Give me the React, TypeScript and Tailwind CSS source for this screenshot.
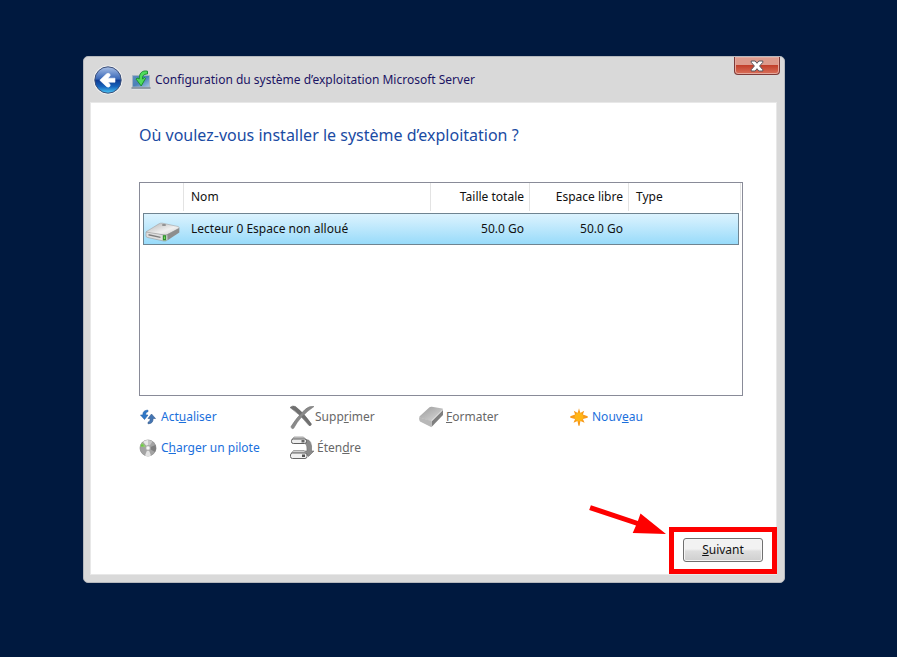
import { useState, type ReactNode } from "react";

type Disk = {
  name: string;
  total: string;
  free: string;
  type: string;
};

const disks: Disk[] = [
  { name: "Lecteur 0 Espace non alloué", total: "50.0 Go", free: "50.0 Go", type: "" },
];

function BackIcon() {
  return (
    <svg viewBox="0 0 30 30" className="size-[30px]" aria-hidden="true">
      <defs>
        <linearGradient id="backFill" x1="0" y1="0" x2="0" y2="1">
          <stop offset="0" stopColor="#a9c0e6" />
          <stop offset="0.45" stopColor="#3a68b8" />
          <stop offset="0.52" stopColor="#0f3c93" />
          <stop offset="0.75" stopColor="#1665bd" />
          <stop offset="1" stopColor="#4cc8f5" />
        </linearGradient>
      </defs>
      <circle cx="15" cy="15" r="14.5" fill="#f2f2f2" />
      <circle cx="15" cy="15" r="13.2" fill="url(#backFill)" stroke="#3c4f78" strokeWidth="1" />
      <path
        d="M6.800 15.200 13.400 9q1.800-1.500 3.400 0 1 1.300-.3 2.600l-1.500 1.600h7v4h-7l1.500 1.600q1.300 1.300.3 2.600-1.600 1.500-3.400 0z"
        fill="#fff"
        stroke="#fff"
        strokeWidth="0.6"
        strokeLinejoin="round"
      />
    </svg>
  );
}

function SetupIcon() {
  return (
    <svg viewBox="0 0 20 20" className="size-5" aria-hidden="true">
      <defs>
        <linearGradient id="setupBox" x1="0" y1="0" x2="1" y2="1">
          <stop offset="0" stopColor="#5c8dbd" />
          <stop offset="0.5" stopColor="#4a80b8" />
          <stop offset="1" stopColor="#a3c8e6" />
        </linearGradient>
      </defs>
      <path d="M1.500 5.500h17V17h-17z" fill="url(#setupBox)" stroke="#a5b3c0" strokeWidth="0.800" />
      <path d="M.5 17h19v2H.5z" fill="#8b98a3" />
      <path d="M1 19.400h18" stroke="#dfe5ea" strokeWidth="0.800" />
      <path
        d="M16.500 1.200C11 0 8 3.500 8.300 9L6 8l-.8 1.200 5 6.800 4.300-7.600-1-.9-2 1.500C11.300 6 12.500 4 16.500 4z"
        fill="#4fdd5c"
        stroke="#1c8f31"
        strokeWidth="1"
        strokeLinejoin="round"
      />
    </svg>
  );
}

function CloseIcon() {
  return (
    <svg viewBox="0 0 14 12" className="h-3 w-[14px]" aria-hidden="true">
      <path
        d="M1.200 1h4L7 3.300 8.800 1h4v1.300L9.600 6l3.200 3.700V11h-4L7 8.700 5.200 11h-4V9.700L4.400 6 1.200 2.300z"
        fill="#fff"
        stroke="#56565f"
        strokeWidth="1"
        strokeLinejoin="round"
      />
    </svg>
  );
}

function DriveIcon() {
  return (
    <svg viewBox="0 0 36 20" className="h-5 w-9" aria-hidden="true">
      <defs>
        <linearGradient id="driveTop" x1="0" y1="0" x2="1" y2="1">
          <stop offset="0" stopColor="#b2b2b2" />
          <stop offset="0.600" stopColor="#f0f0f0" />
          <stop offset="1" stopColor="#c8c8c8" />
        </linearGradient>
      </defs>
      <path d="M1.500 9.500 14 1.800q1.500-.9 3.500-.6L33 4.500q2 .7.800 2L22.500 12.500q-1.500.8-3.500.4L2 11z" fill="url(#driveTop)" stroke="#a2a2a2" strokeWidth="0.600" />
      <path d="M22 12.600 34.300 6v4.500L23 18z" fill="#8d8d8d" />
      <path d="M1 10v4q0 1 1.300 1.400L18.500 19q2.500.4 4-.9v-5.400q-1.500.6-3.500.2z" fill="#dedede" stroke="#8c8c8c" strokeWidth="0.500" />
      <path d="m3.500 12.800 12 2.600" stroke="#7d7d7d" strokeWidth="1.400" />
      <path d="M17.800 13.200h3.400v5.200h-3.400z" fill="#2f8f2b" />
      <path d="M18.900 14.500h1.200V17h-1.200z" fill="#76d763" />
      <ellipse cx="19" cy="3" rx="2.200" ry="0.900" fill="#8f8f8f" />
    </svg>
  );
}

function RefreshIcon() {
  return (
    <svg viewBox="0 0 18 18" className="size-[18px]" aria-hidden="true">
      <path d="M9 2.200C5.300 2.200 3.800 3.800 3.900 7H1.500l4 4.500L9 7H6.700C6.700 5 7.300 4 9 3.700z" fill="#2f78c8" stroke="#2561a6" strokeWidth="0.600" />
      <path d="M9 15.800c3.600 0 5.200-1.800 5.100-5.300h2.400L12.500 6 9 10.500h2.200c0 2-.6 3.300-2.200 3.700z" fill="#4475b3" stroke="#355c8d" strokeWidth="0.600" />
    </svg>
  );
}

function DiscIcon() {
  return (
    <svg viewBox="0 0 18 18" className="size-[18px]" aria-hidden="true">
      <circle cx="9" cy="9" r="8" fill="#a3a3a3" stroke="#8b8b8b" strokeWidth="0.700" />
      <path d="M9 9 4 2.800A8 8 0 0 1 9 1z" fill="#e6e6e6" />
      <path d="M9 9 9 1a8 8 0 0 1 4.500 1.500z" fill="#c6c6c6" />
      <path d="m9 9 7.500-3A8 8 0 0 1 16 13z" fill="#7f7f7f" />
      <path d="m9 9 3 7.400a8 8 0 0 1-6 0z" fill="#e2e2e2" />
      <path d="M9 9 1.200 7.500A8 8 0 0 1 3.200 3.500z" fill="#9bc47f" />
      <path d="M2 5.500h2.500v2H2z" fill="#67cf3f" />
      <circle cx="9" cy="9" r="2.600" fill="#ddd" stroke="#909090" strokeWidth="0.600" />
      <circle cx="9" cy="9" r="1" fill="#fff" />
    </svg>
  );
}

function DeleteIcon() {
  return (
    <svg viewBox="0 0 26 26" className="size-[26px]" aria-hidden="true">
      <path d="M1 3.500Q3.500 1 6.500 2.500 15 9 22.500 20q-.3 2.200-2.500 1.500Q11 10 1 3.500z" fill="#707070" stroke="#606060" strokeWidth="0.500" />
      <path d="M25 2.500Q20 1.500 15.500 6 7 14 2 22.500q.3 3 2.700 1.800Q11 12 25 2.500z" fill="#8a8a8a" stroke="#707070" strokeWidth="0.500" />
    </svg>
  );
}

function ExtendIcon() {
  return (
    <svg viewBox="0 0 26 26" className="size-[26px]" aria-hidden="true">
      <path d="M17 4.500q6.500 0 5.500 11.500H25l-5.500 5.500L15 16h3q.5-6-2-8z" fill="#8a8a8a" stroke="#6b6b6b" strokeWidth="0.600" />
      <path d="M3 4.500 5 2h9.500l2.500 2.500z" fill="#ccc" stroke="#888" strokeWidth="0.700" />
      <rect x="2.500" y="4" width="15" height="4.500" rx="1.800" fill="#ededed" stroke="#5f5f5f" />
      <path d="M12.500 5h3v2.500h-3z" fill="#666" />
      <path d="m2.500 18 2-2.500H15l2.500 2.500z" fill="#d0d0d0" stroke="#888" strokeWidth="0.700" />
      <rect x="1.500" y="18" width="16.500" height="5.500" rx="2" fill="#f0f0f0" stroke="#666" />
      <path d="M13 19.500h3v2.500h-3z" fill="#555" />
    </svg>
  );
}

function FormatIcon() {
  return (
    <svg viewBox="0 0 26 22" className="h-[22px] w-[26px]" aria-hidden="true">
      <defs>
        <linearGradient id="formatTop" x1="0" y1="0" x2="1" y2="1">
          <stop offset="0" stopColor="#9a9a9a" />
          <stop offset="1" stopColor="#dcdcdc" />
        </linearGradient>
      </defs>
      <path d="m13.500 14.500 11.500-11V9L13.500 21z" fill="#7f7f7f" />
      <path d="M11.500 1.200q1-.7 2.300-.5l10.500 1.800q1.300.4.500 1.400L14.500 14.500q-1 .8-2.500.4L2 11.800q-1.300-.6-.3-1.500z" fill="url(#formatTop)" />
      <path d="M1 11.200 13.500 15v6.200L2 15.500Q1 14.500 1 11.200z" fill="#b8b8b8" />
      <path d="M13.500 15 24.800 3.800" stroke="#f0f0f0" strokeWidth="0.800" />
    </svg>
  );
}

function NewIcon() {
  return (
    <svg viewBox="0 0 18 18" className="size-[18px]" aria-hidden="true">
      <path
        d="M9 .3 10.300 5l3.900-2.200L12.900 6.500l4.800 1.700v1.600l-4.800 1.300 1.700 3.700-4.200-1.900L9.600 17.700H8.400l-.9-4.800-4 1.900 1.600-3.700L.3 9.800V8.200l4.800-1.700L3.800 2.800 7.700 5z"
        fill="#f79a1a"
      />
      <circle cx="9" cy="9" r="4.400" fill="#ffb516" />
    </svg>
  );
}

type ActionProps = {
  icon: ReactNode;
  disabled?: boolean;
  gap?: string;
  children: ReactNode;
};

function Action({ icon, disabled, gap = "gap-1", children }: ActionProps) {
  return (
    <button
      type="button"
      disabled={disabled}
      className={`flex h-[31px] items-center whitespace-nowrap text-left ${gap} ${
        disabled ? "text-[#686868]" : "text-[#1b70dc] hover:text-[#3399ff]"
      }`}
    >
      {icon}
      <span>{children}</span>
    </button>
  );
}

export default function App() {
  const [selected, setSelected] = useState(0);

  return (
    <main className="min-h-screen bg-[#00193f] pt-14 pr-28 pb-[74px] pl-[83px] font-['Noto_Sans','Open_Sans',sans-serif] text-[12px] leading-4 text-[#111]">
      <section className="flex min-h-[527px] flex-col rounded-[5px] border border-[#b5b8bd] bg-[#d9d9d9] pr-[7px] pb-[7px] pl-[6px]">
        <header className="flex h-[45px] items-start justify-between">
          <div className="flex items-center pt-2 pl-[3px]">
            <button type="button" aria-label="Précédent" className="mr-2">
              <BackIcon />
            </button>
            <SetupIcon />
            <h1 className="ml-1 whitespace-nowrap text-[#1b1464]">
              Configuration du système d’exploitation Microsoft Server
            </h1>
          </div>
          <button
            type="button"
            aria-label="Fermer"
            className="-mr-[3px] flex h-[18px] w-[46px] items-center justify-center rounded-b-[4px] border border-t-0 border-[#7d3a38] bg-linear-to-b from-[#dd9a8c] from-45% via-[#c23f2b] via-50% to-[#d9705a] shadow-[inset_0_0_0_1px_#e5a99e]"
          >
            <CloseIcon />
          </button>
        </header>

        <div className="flex flex-1 flex-col border border-[#e8e8e8] bg-white pr-[33px] pl-12">
          <h2 className="pt-5 text-[16px] leading-6 text-[#1a4ba3]">
            Où voulez-vous installer le système d’exploitation ?
          </h2>

          <div className="mt-[35px] h-[214px] border border-[#898b98] pr-px pl-[3px]">
            <table className="w-full table-fixed border-separate border-spacing-0">
              <thead>
                <tr className="h-7 text-left">
                  <th aria-label="Icône" className="w-[41px] border-r border-[#e3e3e3]" />
                  <th className="border-r border-[#e3e3e3] pl-[7px] font-normal">Nom</th>
                  <th className="w-[99px] border-r border-[#e3e3e3] pr-[5px] text-right font-normal">Taille totale</th>
                  <th className="w-[99px] border-r border-[#e3e3e3] pr-[5px] text-right font-normal">Espace libre</th>
                  <th className="w-[110px] pl-[7px] font-normal">Type</th>
                  <td className="w-[2px] border-r border-[#e3e3e3] p-0" />
                </tr>
                <tr aria-hidden="true" className="h-[2px]" />
              </thead>
              <tbody>
                {disks.map((disk, index) => {
                  const cell =
                    index === selected
                      ? "border-y border-[#6f8491] bg-linear-to-b from-[#dcf3fe] to-[#98dbfa]"
                      : "border-y border-transparent";
                  return (
                    <tr key={disk.name} onClick={() => setSelected(index)} className="h-8">
                      <td className={`border-l p-0 pt-[6px] pl-px ${cell}`}>
                        <DriveIcon />
                      </td>
                      <td className={`py-0 pl-[7px] ${cell}`}>{disk.name}</td>
                      <td className={`py-0 pr-[6px] text-right ${cell}`}>{disk.total}</td>
                      <td className={`py-0 pr-[6px] text-right ${cell}`}>{disk.free}</td>
                      <td className={`border-r py-0 pl-[7px] ${cell}`}>{disk.type}</td>
                    </tr>
                  );
                })}
              </tbody>
            </table>
          </div>

          <div className="mt-[5px] grid grid-cols-[150px_129px_152px_1fr]">
            <Action icon={<RefreshIcon />}>
              Act<u>u</u>aliser
            </Action>
            <Action icon={<DeleteIcon />} gap="gap-0" disabled>
              Supp<u>r</u>imer
            </Action>
            <Action icon={<FormatIcon />} gap="gap-[2px]" disabled>
              <u>F</u>ormater
            </Action>
            <Action icon={<NewIcon />}>
              Nouv<u>e</u>au
            </Action>
            <Action icon={<DiscIcon />}>
              C<u>h</u>arger un pilote
            </Action>
            <Action icon={<ExtendIcon />} gap="gap-[2px]" disabled>
              Éten<u>d</u>re
            </Action>
          </div>

          <footer className="-mr-5 mt-auto mb-3 flex justify-end">
            <div className="relative">
              <button
                type="button"
                className="flex h-6 w-20 items-center justify-center rounded-[3px] border border-[#707070] bg-linear-to-b from-[#f2f2f2] from-45% via-[#dedede] via-55% to-[#cfcfcf] shadow-[inset_0_0_0_1px_#f6f6f6]"
              >
                <span>
                  <u>S</u>uivant
                </span>
              </button>
              {/* highlight around the next button */}
              <div className="pointer-events-none absolute -top-[11px] -right-[14px] -bottom-3 -left-[14px] border-[5px] border-[#fe0000]" />
              <svg
                viewBox="0 0 78 32"
                className="pointer-events-none absolute -top-[33px] -left-[95px] h-8 w-[78px]"
                aria-hidden="true"
              >
                <path d="M2.900 .2 1.200 5 48 20.500l-3.300 7.500L78 29 52.500 8.500l-2.600 7.400z" fill="#fe0000" />
              </svg>
            </div>
          </footer>
        </div>
      </section>
    </main>
  );
}
